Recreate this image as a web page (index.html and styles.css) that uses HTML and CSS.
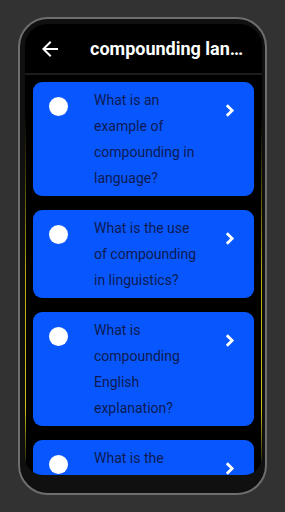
FILE: index.html
```html
<!DOCTYPE html>
<html>
<head>
  <meta charset="UTF-8">
  <meta name="viewport" content="width=device-width, initial-scale=1">
  <title>compounding language</title>
  <link rel="stylesheet" href="styles.css">
</head>
<body>

<div class="phone">
  <div class="screen">

    <div class="appbar">
      <svg class="back" width="24" height="24" viewBox="0 0 24 24">
        <path d="M20 11H7.83l5.59-5.59L12 4l-8 8 8 8 1.41-1.41L7.83 13H20v-2z" fill="#fff"/>
      </svg>
      <h1 class="title">compounding language</h1>
    </div>

    <div class="list">
      <div class="card">
        <span class="dot"></span>
        <p class="question">What is an example of compounding in language?</p>
        <svg class="chev" width="11" height="15" viewBox="0 0 10 14"><path d="M2.5 2l5 5-5 5" fill="none" stroke="#fff" stroke-width="2.6"/></svg>
      </div>
      <div class="card">
        <span class="dot"></span>
        <p class="question">What is the use of compounding in linguistics?</p>
        <svg class="chev" width="11" height="15" viewBox="0 0 10 14"><path d="M2.5 2l5 5-5 5" fill="none" stroke="#fff" stroke-width="2.6"/></svg>
      </div>
      <div class="card">
        <span class="dot"></span>
        <p class="question">What is compounding English explanation?</p>
        <svg class="chev" width="11" height="15" viewBox="0 0 10 14"><path d="M2.5 2l5 5-5 5" fill="none" stroke="#fff" stroke-width="2.6"/></svg>
      </div>
      <div class="card">
        <span class="dot"></span>
        <p class="question">What is the difference between compounding and blending?</p>
        <svg class="chev" width="11" height="15" viewBox="0 0 10 14"><path d="M2.5 2l5 5-5 5" fill="none" stroke="#fff" stroke-width="2.6"/></svg>
      </div>
    </div>

  </div>
</div>

</body>
</html>
```

FILE: styles.css
```css
html, body{
  margin: 0;
  height: 512px;
  background: #323232;
  overflow: hidden;
}

.phone{
  box-sizing: border-box;
  width: 249px;
  height: 478px;
  margin: 17px 0 0 18px;
  padding: 5px 3px 18px 5px;
  border: 2px solid #6e6e6e;
  border-radius: 30px;
  background: #101010;
}

.screen{
  height: 100%;
  border-radius: 22px 22px 18px 18px;
  overflow: hidden;
  display: flex;
  flex-direction: column;
  background:
    linear-gradient(to bottom, rgba(0,0,0,0) 20%, #b8a712 55%, #d2c21c 85%, rgba(0,0,0,0)) left top / 1px 100% no-repeat,
    linear-gradient(to bottom, rgba(0,0,0,0) 20%, #b8a712 55%, #d2c21c 85%, rgba(0,0,0,0)) right top / 1px 100% no-repeat,
    #000;
}

.appbar{
  flex: none;
  height: 49px;
  display: flex;
  align-items: center;
  padding: 0 0 0 13px;
  border-bottom: 2px solid #1c1c1c;
}

.back{
  flex: none;
}

.title{
  margin: 0 0 0 28px;
  width: 158px;
  white-space: nowrap;
  overflow: hidden;
  text-overflow: ellipsis;
  color: #fff;
  font-family: Roboto, "Liberation Sans", sans-serif;
  font-weight: bold;
  font-size: 18px;
}

.list{
  flex: 1;
  padding: 7px 8px 0 8px;
  display: flex;
  flex-direction: column;
  gap: 14px;
}

.card{
  flex: none;
  display: grid;
  grid-template-columns: 19px 108px 11px;
  column-gap: 26px;
  align-items: start;
  padding: 5px 16px;
  border-radius: 9px;
  background: #0857fe;
}

.dot{
  width: 19px;
  height: 19px;
  margin-top: 10px;
  border-radius: 50%;
  background: #fff;
}

.question{
  margin: 0;
  color: #0c1a52;
  font-family: Roboto, "Liberation Sans", sans-serif;
  font-size: 14px;
  line-height: 26px;
}

.chev{
  margin: 16px 0 0 -4px;
}
```
